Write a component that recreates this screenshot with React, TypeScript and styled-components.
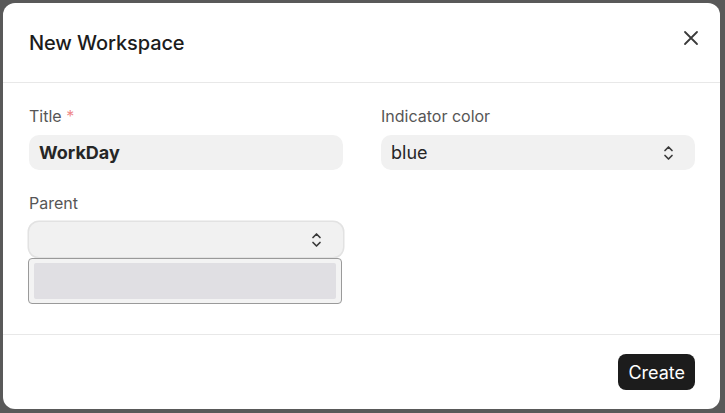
import React from 'react';
import styled, { createGlobalStyle } from 'styled-components';

const GlobalStyle = createGlobalStyle`
  html, body {
    margin: 0;
    padding: 0;
    height: 413px;
    overflow: hidden;
    background: #5a5a5a;
    font-family: Inter, "Noto Sans", sans-serif;
  }
`;

const Backdrop = styled.div`
  width: 725px;
  height: 413px;
  padding: 3px 5px 4px 3px;
  box-sizing: border-box;
  background: #595959;
`;

const Dialog = styled.div`
  position: relative;
  width: 100%;
  height: 100%;
  background: #fff;
  border-radius: 12px;
  display: flex;
  flex-direction: column;
`;

const Header = styled.div`
  height: 79px;
  display: flex;
  align-items: center;
  padding: 0 26px;
  border-bottom: 1px solid #e8e8e8;
`;

const Title = styled.h2`
  margin: 0;
  font-size: 20px;
  font-weight: 500;
  color: #1c1c1c;
  letter-spacing: -0.1px;
`;

const CloseButton = styled.button`
  position: absolute;
  top: 24px;
  right: 18px;
  width: 22px;
  height: 22px;
  padding: 0;
  border: none;
  background: none;
  display: flex;
  align-items: center;
  justify-content: center;
`;

const Body = styled.div`
  flex: 1;
  padding: 23px 25px 0 26px;
  display: grid;
  grid-template-columns: 314px 314px;
  column-gap: 38px;
  row-gap: 23px;
  align-content: start;
`;

const Field = styled.div`
  position: relative;
  display: flex;
  flex-direction: column;
  gap: 9px;
`;

const Label = styled.label`
  font-size: 16px;
  line-height: 20px;
  color: #565656;
`;

const Required = styled.span`
  color: #ef8a8a;
`;

const Input = styled.div<{ focused?: boolean }>`
  height: 35px;
  box-sizing: border-box;
  border-radius: 10px;
  background: #f1f1f1;
  display: flex;
  align-items: center;
  justify-content: space-between;
  padding: 0 21px 0 10px;
  font-size: 18px;
  color: #262626;
  ${p => (p.focused ? 'box-shadow: 0 0 0 1.5px #e2e2e2;' : '')}
`;

const Value = styled.span<{ bold?: boolean }>`
  font-weight: ${p => (p.bold ? 700 : 400)};
`;

const Dropdown = styled.div`
  position: absolute;
  top: 65px;
  left: -1px;
  width: 314px;
  height: 46px;
  box-sizing: border-box;
  border: 1px solid #9a9a9a;
  border-radius: 4px;
  background: #f3f3f3;
  padding: 4px 5px;
`;

const Option = styled.div`
  height: 36px;
  border-radius: 2px;
  background: #e0dfe3;
`;

const Footer = styled.div`
  height: 74px;
  border-top: 1px solid #e8e8e8;
  display: flex;
  align-items: center;
  justify-content: flex-end;
  padding: 0 25px;
`;

const PrimaryButton = styled.button`
  height: 36px;
  padding: 0 10px;
  border: none;
  border-radius: 8px;
  background: #1c1c1c;
  color: #fff;
  font-family: inherit;
  font-size: 18px;
`;

const Chevrons = () => (
  <svg width="11" height="16" viewBox="0 0 11 16" fill="none" stroke="#3a3a3a" strokeWidth="1.7" strokeLinecap="round" strokeLinejoin="round">
    <path d="M2 5.5 L5.5 2 L9 5.5" />
    <path d="M2 10.5 L5.5 14 L9 10.5" />
  </svg>
);

export default function App() {
  return (
    <>
      <GlobalStyle />
      <Backdrop>
        <Dialog>
          <Header>
            <Title>New Workspace</Title>
          </Header>
          <CloseButton aria-label="Close">
            <svg width="16" height="16" viewBox="0 0 16 16" stroke="#3a3a3a" strokeWidth="1.8" strokeLinecap="round">
              <path d="M2 2 L14 14 M14 2 L2 14" />
            </svg>
          </CloseButton>
          <Body>
            <Field>
              <Label>Title <Required>*</Required></Label>
              <Input>
                <Value bold>WorkDay</Value>
              </Input>
            </Field>
            <Field>
              <Label>Indicator color</Label>
              <Input>
                <Value>blue</Value>
                <Chevrons />
              </Input>
            </Field>
            <Field>
              <Label>Parent</Label>
              <Input focused>
                <Value />
                <Chevrons />
              </Input>
              <Dropdown>
                <Option />
              </Dropdown>
            </Field>
          </Body>
          <Footer>
            <PrimaryButton>Create</PrimaryButton>
          </Footer>
        </Dialog>
      </Backdrop>
    </>
  );
}
